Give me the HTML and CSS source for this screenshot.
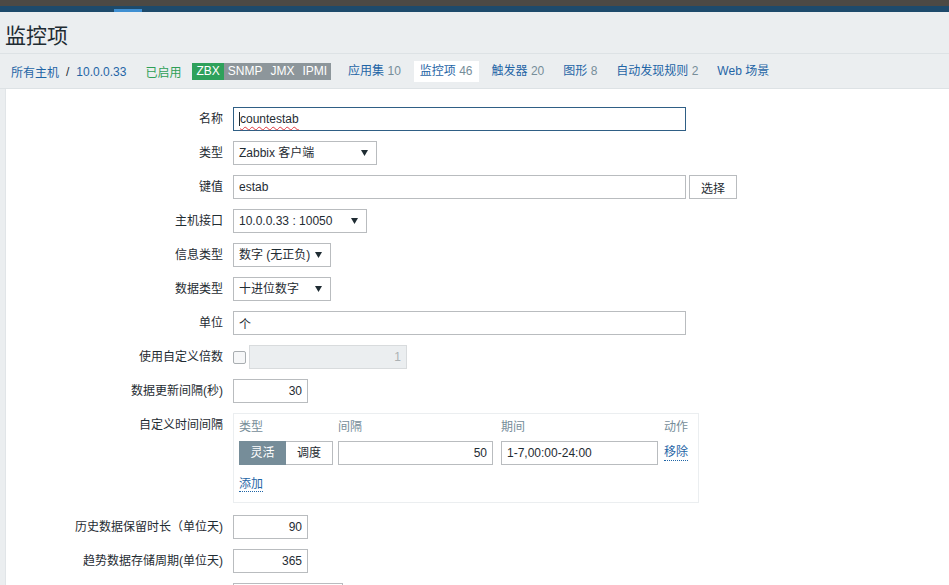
FILE: index.html
```html
<!DOCTYPE html>
<html lang="zh-CN">
<head>
<meta charset="utf-8">
<title>监控项</title>
<link rel="stylesheet" href="styles.css">
</head>
<body>
<div class="topbar"></div>
<div class="navbar"><span class="nav-hl"></span></div>
<header class="page-head"><h1>监控项</h1></header>
<nav class="crumbs">
  <a class="link" href="#">所有主机</a>
  <span class="sep">/</span>
  <a class="link" href="#">10.0.0.33</a>
  <span class="enabled">已启用</span>
  <span class="badges"><span class="badge on">ZBX</span><span class="badge">SNMP</span><span class="badge">JMX</span><span class="badge">IPMI</span></span>
  <span class="tabs">
    <a class="tab" href="#"><span class="link">应用集</span> <span class="num">10</span></a>
    <a class="tab active" href="#"><span class="link">监控项</span> <span class="num">46</span></a>
    <a class="tab" href="#"><span class="link">触发器</span> <span class="num">20</span></a>
    <a class="tab" href="#"><span class="link">图形</span> <span class="num">8</span></a>
    <a class="tab" href="#"><span class="link">自动发现规则</span> <span class="num">2</span></a>
    <a class="tab" href="#"><span class="link">Web 场景</span></a>
  </span>
</nav>
<main class="content">
  <form class="form">
    <label class="lbl">名称</label>
    <div class="ctl"><div class="inp w453 focus"><span class="caret"></span><span class="spell">countestab</span></div></div>

    <label class="lbl">类型</label>
    <div class="ctl"><div class="sel w144">Zabbix 客户端<svg class="arr" width="7" height="6" viewBox="0 0 7 6"><path d="M0 0H7L3.5 6Z" fill="#1f2c33"/></svg></div></div>

    <label class="lbl">键值</label>
    <div class="ctl"><input class="inp w453" type="text" value="estab"><button class="btn" type="button">选择</button></div>

    <label class="lbl">主机接口</label>
    <div class="ctl"><div class="sel w134">10.0.0.33 : 10050<svg class="arr" width="7" height="6" viewBox="0 0 7 6"><path d="M0 0H7L3.5 6Z" fill="#1f2c33"/></svg></div></div>

    <label class="lbl">信息类型</label>
    <div class="ctl"><div class="sel w98">数字 (无正负)<svg class="arr" width="7" height="6" viewBox="0 0 7 6"><path d="M0 0H7L3.5 6Z" fill="#1f2c33"/></svg></div></div>

    <label class="lbl">数据类型</label>
    <div class="ctl"><div class="sel w98">十进位数字<svg class="arr" width="7" height="6" viewBox="0 0 7 6"><path d="M0 0H7L3.5 6Z" fill="#1f2c33"/></svg></div></div>

    <label class="lbl">单位</label>
    <div class="ctl"><input class="inp w453" type="text" value="个"></div>

    <label class="lbl">使用自定义倍数</label>
    <div class="ctl"><span class="chk"></span><input class="inp w158 num-r dis" type="text" value="1" disabled></div>

    <label class="lbl">数据更新间隔(秒)</label>
    <div class="ctl"><input class="inp w75 num-r" type="text" value="30"></div>

    <label class="lbl">自定义时间间隔</label>
    <div class="ctl">
      <div class="intervals">
        <div class="iv-grid">
          <span class="iv-h">类型</span>
          <span class="iv-h">间隔</span>
          <span class="iv-h">期间</span>
          <span class="iv-h">动作</span>
          <span class="seg"><span class="seg-b act">灵活</span><span class="seg-b">调度</span></span>
          <span><input class="inp w155 num-r" type="text" value="50"></span>
          <span><input class="inp w157" type="text" value="1-7,00:00-24:00"></span>
          <span class="iv-act"><a class="dlink" href="#">移除</a></span>
        </div>
        <div class="iv-add"><a class="dlink" href="#">添加</a></div>
      </div>
    </div>

    <label class="lbl">历史数据保留时长（单位天)</label>
    <div class="ctl"><input class="inp w75 num-r" type="text" value="90"></div>

    <label class="lbl">趋势数据存储周期(单位天)</label>
    <div class="ctl"><input class="inp w75 num-r" type="text" value="365"></div>

    <span class="lbl"></span>
    <div class="ctl"><div class="sel w110"></div></div>
  </form>
</main>
</body>
</html>
```

FILE: styles.css
```css
* { box-sizing: border-box; }
html, body {
  margin: 0;
  padding: 0;
  background: #ebeef0;
  color: #1f2c33;
  font-family: "Liberation Sans", Arial, "Noto Sans CJK SC", sans-serif;
  font-size: 12px;
  overflow: hidden;
}
.topbar { height: 6px; background: #4c4944; }
.navbar {
  height: 6px;
  background: #1d4a6b;
  display: flex;
  align-items: flex-end;
  padding-left: 114px;
}
.nav-hl { display: block; width: 28px; height: 3px; background: #3f8fd2; }

.page-head {
  height: 42px;
  border-bottom: 1px solid #dde2e5;
  padding: 0 5px;
  display: flex;
  align-items: center;
}
.page-head h1 {
  margin: 0;
  padding-top: 2px;
  font-size: 21px;
  font-weight: normal;
  color: #1f2c33;
}

.crumbs {
  height: 35px;
  display: flex;
  align-items: center;
  padding-left: 11px;
  padding-top: 1px;
  border-bottom: 1px solid #dde2e5;
}
.link { color: #1f65a6; text-decoration: none; }
a { text-decoration: none; }
.sep { color: #1f2c33; margin: 0 7px 0 7px; }
.enabled { color: #2f9f57; margin-left: 19px; }
.badges { display: flex; margin-left: 11px; }
.badge {
  background: #8d969b;
  color: #fff;
  height: 17px;
  line-height: 17px;
  padding: 0 4px;
  font-size: 12px;
}
.badge.on { background: #2ea15b; }
.tabs { display: flex; gap: 7px; margin-left: 11px; }
.tab {
  display: block;
  height: 21px;
  line-height: 21px;
  padding: 0 6px;
}
.tab.active { background: #fff; }
.num { color: #768d99; }

.content {
  margin-left: 5px;
  background: #fff;
  border-left: 1px solid #e1e5e8;
  padding-top: 18px;
  min-height: 600px;
}
.form {
  display: grid;
  grid-template-columns: 217px 1fr;
  column-gap: 10px;
  row-gap: 10px;
  margin: 0;
}
.lbl {
  text-align: right;
  line-height: 24px;
  white-space: nowrap;
}
.ctl { display: flex; align-items: center; }

.inp {
  height: 24px;
  border: 1px solid #b9bcbf;
  background: #fff;
  padding: 0 5px;
  font: inherit;
  color: #1f2c33;
  outline: none;
  margin: 0;
}
div.inp { display: flex; align-items: center; }
.inp.focus { border-color: #2f5f85; }
.caret { display: block; width: 1px; height: 14px; background: #1f2c33; }
.spell {
  text-decoration: underline wavy #e0383e;
  text-decoration-thickness: 1px;
  text-underline-offset: 3px;
  text-decoration-skip-ink: none;
}
.num-r { text-align: right; }
.inp.dis { background: #ebeef0; border-color: #d8dbdd; color: #acb1b4; }
.w453 { width: 453px; }
.w158 { width: 158px; }
.w155 { width: 155px; }
.w157 { width: 157px; }
.w75 { width: 75px; }

.sel {
  position: relative;
  height: 24px;
  line-height: 22px;
  border: 1px solid #b9bcbf;
  background: #fff;
  padding: 0 5px;
  white-space: nowrap;
}
.arr { position: absolute; right: 8px; top: 8px; }
.w144 { width: 144px; }
.w134 { width: 134px; }
.w98 { width: 98px; }
.w110 { width: 110px; }

.btn {
  margin-left: 3px;
  height: 24px;
  width: 48px;
  border: 1px solid #b9bcbf;
  background: #fff;
  font: inherit;
  color: #1f2c33;
  padding: 0;
}
.chk {
  display: block;
  width: 13px;
  height: 13px;
  border: 1px solid #a9aeb1;
  border-radius: 2px;
  background: #f6f7f8;
  margin-right: 3px;
}

.intervals {
  width: 466px;
  border: 1px solid #ebeef0;
  padding: 5px 5px 10px 5px;
  margin-bottom: 2px;
}
.iv-grid {
  display: grid;
  grid-template-columns: 99px 163px 163px auto;
  row-gap: 6px;
}
.iv-h { color: #768d99; line-height: 16px; }
.seg { display: flex; }
.seg-b {
  width: 47px;
  height: 24px;
  line-height: 22px;
  text-align: center;
  border: 1px solid #b9bcbf;
  background: #fff;
}
.seg-b.act { background: #768d99; border-color: #768d99; color: #fff; }
.seg-b + .seg-b { border-left: none; }
.iv-act { display: flex; align-items: center; }
.dlink {
  color: #1f65a6;
  border-bottom: 1px dotted #1f65a6;
  line-height: 15px;
}
.iv-add { margin-top: 11px; line-height: 16px; }
```
